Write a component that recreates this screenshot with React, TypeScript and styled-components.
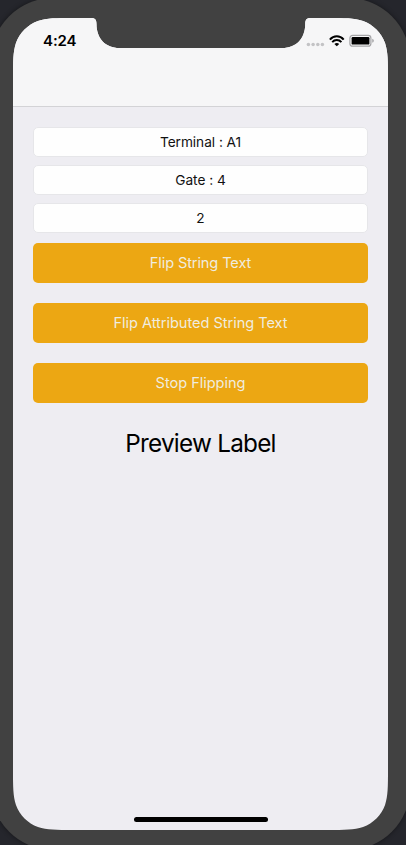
import React from "react";
import styled, { createGlobalStyle } from "styled-components";

const W = 375;
const H = 812;
const R = 39.5;

// Continuous ("squircle") corner control points, as factors of the radius.
const A = 1.5287 * R;
const B = 1.0885 * R;
const C = 0.8684 * R;
const D = 0.6315 * R;
const E = 0.0749 * R;
const F = 0.3728 * R;
const G = 0.1691 * R;

const screenPath = [
  `M${A} 0 H78`,
  `C82 0 83.5 1.6 83.5 6`,
  `C83.5 20.5 92.5 30 106.5 30`,
  `H${W - 105.8}`,
  `C${W - 91.8} 30 ${W - 82.8} 20.5 ${W - 82.8} 6`,
  `C${W - 82.8} 1.6 ${W - 81.3} 0 ${W - 77.3} 0`,
  `H${W - A}`,
  `C${W - B} 0 ${W - C} 0 ${W - D} ${E}`,
  `C${W - F} ${G} ${W - G} ${F} ${W - E} ${D}`,
  `C${W} ${C} ${W} ${B} ${W} ${A}`,
  `V${H - A}`,
  `C${W} ${H - B} ${W} ${H - C} ${W - E} ${H - D}`,
  `C${W - G} ${H - F} ${W - F} ${H - G} ${W - D} ${H - E}`,
  `C${W - C} ${H} ${W - B} ${H} ${W - A} ${H}`,
  `H${A}`,
  `C${B} ${H} ${C} ${H} ${D} ${H - E}`,
  `C${F} ${H - G} ${G} ${H - F} ${E} ${H - D}`,
  `C0 ${H - C} 0 ${H - B} 0 ${H - A}`,
  `V${A}`,
  `C0 ${B} 0 ${C} ${E} ${D}`,
  `C${G} ${F} ${F} ${G} ${D} ${E}`,
  `C${C} 0 ${B} 0 ${A} 0 Z`,
].join(" ");

const GlobalStyle = createGlobalStyle`
  *, *::before, *::after { box-sizing: border-box; }
  html, body { margin: 0; overflow: hidden; }
  body { font-family: Inter, "Liberation Sans", sans-serif; color: #000; }
`;

const Desktop = styled.div`
  width: 406px;
  height: 845px;
  overflow: hidden;
  background: #25262c;
`;

const Bezel = styled.div`
  width: 419px;
  height: 852px;
  margin: -2px 0 0 -9px;
  padding: 20px 22px;
  border-radius: 62px;
  background: #414141;
  box-shadow: 0 0 5px rgba(0, 0, 0, 0.45);
`;

const Screen = styled.main`
  display: flex;
  flex-direction: column;
  width: ${W}px;
  height: ${H}px;
  background: #eeedf2;
  clip-path: path("${screenPath}");
`;

const NavBar = styled.header`
  flex: none;
  height: 89px;
  background: #f6f6f7;
  border-bottom: 1px solid #d3d3d6;
`;

const StatusBar = styled.div`
  display: flex;
  align-items: center;
  justify-content: space-between;
  height: 44px;
  padding: 2px 14px 0 30px;
`;

const Clock = styled.span`
  font-size: 15px;
  font-weight: 600;
  line-height: 18px;
  letter-spacing: -0.1px;
`;

const Form = styled.div`
  display: flex;
  flex-direction: column;
  gap: 8px;
  padding: 20px 20px 0;
`;

const Field = styled.input`
  display: block;
  width: 100%;
  height: 30px;
  padding: 0 7px 1px;
  border: 1px solid #e6e6e9;
  border-radius: 5px;
  outline: 0;
  background: #fefefe;
  color: #111;
  font-family: inherit;
  font-size: 13.7px;
  letter-spacing: -0.04px;
  text-align: center;
`;

const Actions = styled.div`
  display: flex;
  flex-direction: column;
  gap: 20px;
  padding: 10px 20px 0;
`;

const ActionButton = styled.button<{ $tracking?: number }>`
  height: 40px;
  padding: 0;
  border: 0;
  border-radius: 5px;
  background: #eca713;
  color: #f0ecdf;
  font-family: inherit;
  font-size: 14.6px;
  letter-spacing: ${(p) => p.$tracking ?? -0.05}px;
`;

const Preview = styled.p`
  margin: 25px 0 0;
  font-size: 24.3px;
  line-height: 30px;
  letter-spacing: -0.75px;
  text-align: center;
`;

const HomeIndicator = styled.div`
  align-self: center;
  width: 134px;
  height: 5px;
  margin: auto 0 8px;
  border-radius: 3px;
  background: #000;
`;

function StatusIcons() {
  return (
    <svg width="68" height="14" viewBox="0 0 68 14" aria-hidden="true">
      <g fill="#c3c3c5">
        <circle cx="2.4" cy="10.6" r="1.75" />
        <circle cx="7.1" cy="10.6" r="1.75" />
        <circle cx="11.8" cy="10.6" r="1.75" />
        <circle cx="16.4" cy="10.6" r="1.75" />
      </g>
      <g fill="none" stroke="#000" strokeWidth="2">
        <path d="M23.9 5.6 C27.6 1.2 34 1.2 37.7 5.6" />
        <path d="M26.2 8.2 C28.7 5.4 32.9 5.4 35.4 8.2" />
      </g>
      <path d="M28.4 9.9 C29.8 8.7 31.8 8.7 33.2 9.9 L30.8 12.3 Z" />
      <rect x="43.9" y="1.4" width="21" height="10.8" rx="2.8" fill="none" stroke="#a5a5a7" strokeWidth="1.2" />
      <rect x="45.6" y="3.1" width="17.8" height="7.5" rx="1.2" />
      <path d="M66.2 4.8 Q67.9 5.4 67.9 6.8 Q67.9 8.2 66.2 8.8 Z" fill="#aaaaac" />
    </svg>
  );
}

export default function App() {
  return (
    <>
      <GlobalStyle />
      <Desktop>
        <Bezel>
          <Screen>
            <NavBar>
              <StatusBar>
                <Clock>4:24</Clock>
                <StatusIcons />
              </StatusBar>
            </NavBar>
            <Form>
              <Field defaultValue="Terminal : A1" aria-label="First text" />
              <Field defaultValue="Gate : 4" aria-label="Second text" />
              <Field defaultValue="2" aria-label="Interval" />
            </Form>
            <Actions>
              <ActionButton $tracking={-0.12}>Flip String Text</ActionButton>
              <ActionButton>Flip Attributed String Text</ActionButton>
              <ActionButton>Stop Flipping</ActionButton>
            </Actions>
            <Preview>Preview Label</Preview>
            <HomeIndicator />
          </Screen>
        </Bezel>
      </Desktop>
    </>
  );
}
